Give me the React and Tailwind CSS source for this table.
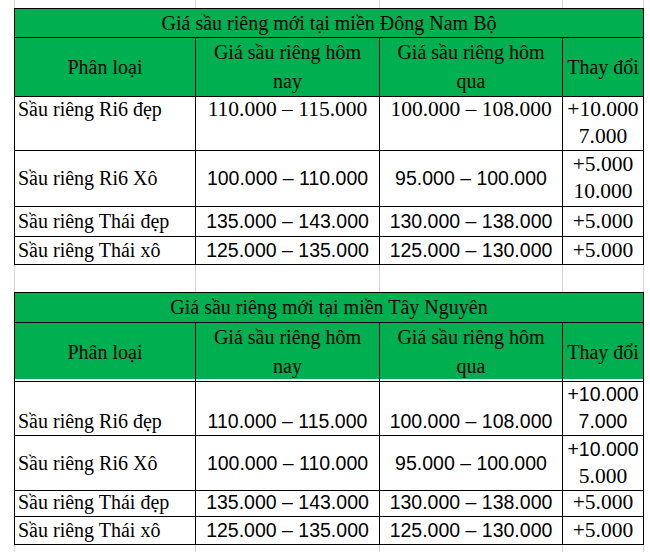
import React from "react";

const SERIF = "font-['Liberation_Serif','Times_New_Roman',serif] text-[20px]";
const SERIFN = "font-['Liberation_Serif','Times_New_Roman',serif] text-[21.5px]";
const SANS = "font-['Liberation_Sans',Arial,sans-serif] text-[19.5px]";

const COLS = "grid grid-cols-[181px_184px_183px_81px]";

function Strip({ h }) {
  return (
    <div className={`${COLS} border-l border-[#d4d4d4] ${h}`}>
      <div className="border-r border-[#d4d4d4]" />
      <div className="border-r border-[#d4d4d4]" />
      <div className="border-r border-[#d4d4d4]" />
      <div className="border-r border-[#d4d4d4]" />
    </div>
  );
}

const cell = "border-r border-b border-black flex flex-col text-black";

function V({ lines, font, align, left }) {
  const j = align === "top" ? "justify-start" : align === "bottom" ? "justify-end" : "justify-center";
  return (
    <div className={`${cell} ${j} ${left ? "items-start pl-[3px]" : "items-center"}`}>
      {lines.map((l, i) => (
        <span key={i} className={`${l.f || font} leading-[27px] whitespace-nowrap`}>
          {l.t}
        </span>
      ))}
    </div>
  );
}

function Table({ title, heights, rows }) {
  return (
    <div className="border-l border-t border-black">
      <div
        className={`${cell} items-center justify-center bg-[#00b050] ${SERIF} leading-[27px] ${heights[0]}`}
      >
        Giá sầu riêng mới tại miền {title}
      </div>
      <div className={`${COLS} ${heights[1]} bg-[#00b050]`}>
        <div className={`${cell} items-center justify-center ${SERIF}`}>Phân loại</div>
        <div className={`${cell} items-center justify-center ${SERIF} leading-[29px]`}>
          <span>Giá sầu riêng hôm</span>
          <span>nay</span>
        </div>
        <div className={`${cell} items-center justify-center ${SERIF} leading-[29px]`}>
          <span>Giá sầu riêng hôm</span>
          <span>qua</span>
        </div>
        <div className={`${cell} items-center justify-center ${SERIF}`}>Thay đổi</div>
      </div>
      {rows.map((r, i) => (
        <div key={i} className={`${COLS} ${heights[i + 2]}`}>
          <V lines={[{ t: r.name }]} font={SERIF} align={r.align} left />
          <V lines={[{ t: r.today }]} font={r.nf} align={r.align} />
          <V lines={[{ t: r.yest }]} font={r.nf} align={r.align} />
          <V lines={r.change} font={SERIFN} align={r.calign || r.align} />
        </div>
      ))}
    </div>
  );
}

export default function App() {
  const t1 = [
    {
      name: "Sầu riêng Ri6 đẹp",
      today: "110.000 – 115.000",
      yest: "100.000 – 108.000",
      nf: SERIFN,
      align: "top",
      change: [{ t: "+10.000" }, { t: "7.000" }],
    },
    {
      name: "Sầu riêng Ri6 Xô",
      today: "100.000 – 110.000",
      yest: "95.000 – 100.000",
      nf: SANS,
      align: "center",
      change: [{ t: "+5.000" }, { t: "10.000" }],
    },
    {
      name: "Sầu riêng Thái đẹp",
      today: "135.000 – 143.000",
      yest: "130.000 – 138.000",
      nf: SANS,
      align: "center",
      change: [{ t: "+5.000" }],
    },
    {
      name: "Sầu riêng Thái xô",
      today: "125.000 – 135.000",
      yest: "125.000 – 130.000",
      nf: SANS,
      align: "center",
      change: [{ t: "+5.000" }],
    },
  ];
  const t2 = [
    {
      name: "Sầu riêng Ri6 đẹp",
      today: "110.000 – 115.000",
      yest: "100.000 – 108.000",
      nf: SANS,
      align: "bottom",
      change: [{ t: "+10.000", f: SANS }, { t: "7.000", f: SANS }],
    },
    {
      name: "Sầu riêng Ri6 Xô",
      today: "100.000 – 110.000",
      yest: "95.000 – 100.000",
      nf: SANS,
      align: "center",
      change: [{ t: "+10.000", f: SANS }, { t: "5.000" }],
    },
    {
      name: "Sầu riêng Thái đẹp",
      today: "135.000 – 143.000",
      yest: "130.000 – 138.000",
      nf: SANS,
      align: "center",
      change: [{ t: "+5.000" }],
    },
    {
      name: "Sầu riêng Thái xô",
      today: "125.000 – 135.000",
      yest: "125.000 – 130.000",
      nf: SANS,
      align: "center",
      change: [{ t: "+5.000" }],
    },
  ];
  return (
    <div className="w-[650px] h-[552px] bg-white pl-[14px] flex flex-col overflow-hidden">
      <Strip h="h-[8px] shrink-0" />
      <div className="w-[630px] shrink-0">
        <Table
          title="Đông Nam Bộ"
          heights={["h-[29px]", "h-[58px]", "h-[54px]", "h-[57px]", "h-[30px]", "h-[28px]"]}
          rows={t1}
        />
      </div>
      <Strip h="h-[27px] shrink-0" />
      <div className="w-[630px] shrink-0">
        <Table
          title="Tây Nguyên"
          heights={["h-[30px]", "h-[56px]", "h-[57px]", "h-[52px]", "h-[29px]", "h-[28px]"]}
          rows={t2}
        />
      </div>
      <Strip h="flex-1" />
    </div>
  );
}
